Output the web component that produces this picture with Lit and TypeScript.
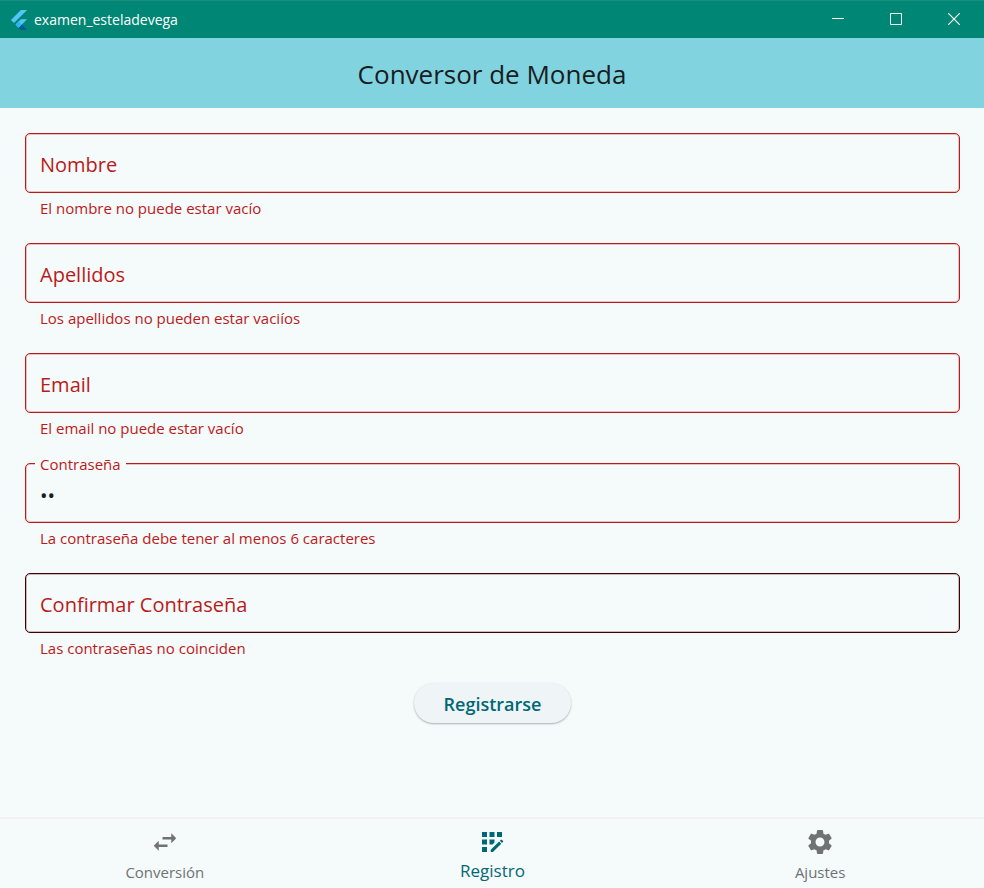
import { LitElement, html, css, svg, nothing } from "lit";
import { customElement, property, state } from "lit/decorators.js";
import { classMap } from "lit/directives/class-map.js";

interface Field {
  id: string;
  label: string;
  error: string;
  type: string;
  value: string;
  hovered?: boolean;
}

const FIELDS: Field[] = [
  { id: "nombre", label: "Nombre", error: "El nombre no puede estar vacío", type: "text", value: "" },
  { id: "apellidos", label: "Apellidos", error: "Los apellidos no pueden estar vaciíos", type: "text", value: "" },
  { id: "email", label: "Email", error: "El email no puede estar vacío", type: "text", value: "" },
  { id: "clave", label: "Contraseña", error: "La contraseña debe tener al menos 6 caracteres", type: "password", value: "ab" },
  { id: "confirmar", label: "Confirmar Contraseña", error: "Las contraseñas no coinciden", type: "password", value: "", hovered: true },
];

const TABS = [
  {
    label: "Conversión",
    icon: svg`<path d="M6.99 11L3 15l3.99 4v-3H14v-2H6.99v-3zM21 9l-3.99-4v3H10v2h7.01v3L21 9z"/>`,
  },
  {
    label: "Registro",
    icon: svg`<path d="M10 4h4v4h-4zM4 16h4v4H4zM4 10h4v4H4zM4 4h4v4H4zM14 12.42V10h-4v4h2.42zM20.88 11.29l-1.17-1.17c-.16-.16-.42-.16-.58 0l-.88.88L20 12.75l.88-.88c.16-.16.16-.42 0-.58zM11 18.25V20h1.75l6.67-6.67-1.75-1.75zM16 4h4v4h-4z"/>`,
  },
  {
    label: "Ajustes",
    icon: svg`<path d="M19.14 12.94c.04-.3.06-.61.06-.94 0-.32-.02-.64-.07-.94l2.03-1.58c.18-.14.23-.41.12-.61l-1.92-3.32c-.12-.22-.37-.29-.59-.22l-2.39.96c-.5-.38-1.03-.7-1.62-.94l-.36-2.54c-.04-.24-.24-.41-.48-.41h-3.84c-.24 0-.43.17-.47.41l-.36 2.54c-.59.24-1.13.57-1.62.94l-2.39-.96c-.22-.08-.47 0-.59.22L2.74 8.87c-.12.21-.08.47.12.61l2.03 1.58c-.05.3-.09.63-.09.94s.02.64.07.94l-2.03 1.58c-.18.14-.23.41-.12.61l1.92 3.32c.12.22.37.29.59.22l2.39-.96c.5.38 1.03.7 1.62.94l.36 2.54c.05.24.24.41.48.41h3.84c.24 0 .44-.17.47-.41l.36-2.54c.59-.24 1.13-.56 1.62-.94l2.39.96c.22.08.47 0 .59-.22l1.92-3.32c.12-.22.07-.47-.12-.61l-2.01-1.58zM12 15.6c-1.98 0-3.6-1.62-3.6-3.6s1.62-3.6 3.6-3.6 3.6 1.62 3.6 3.6-1.62 3.6-3.6 3.6z"/>`,
  },
];

@customElement("title-bar")
export class TitleBar extends LitElement {
  static styles = css`
    :host {
      display: flex;
      align-items: center;
      height: 38px;
      box-sizing: border-box;
      border-top: 1px solid #1a8e7d;
      padding: 0 1px 0 9px;
      background: #008675;
      color: #fff;
    }
    .logo {
      width: 20px;
      height: 20px;
      margin-right: 5px;
    }
    .name {
      flex: 1;
      font-size: 14px;
      line-height: 20px;
    }
    .control {
      display: grid;
      place-items: center;
      width: 58px;
      height: 36px;
      padding: 0 0 2px;
      border: 0;
      background: none;
      color: inherit;
    }
    .glyph {
      width: 12px;
      height: 12px;
      fill: none;
      stroke: currentColor;
    }
    .cross {
      stroke-width: 1.2;
    }
  `;

  render() {
    return html`
      <svg class="logo" viewBox="0 0 24 24" aria-hidden="true">
        <path fill="#54c5f8" d="M14.314 0L2.3 12 6 15.7 21.684.013z" />
        <path fill="#54c5f8" d="M14.328 11.072L7.857 17.53l3.7 3.7L21.7 11.072z" />
        <path fill="#01579b" d="M11.557 21.23L14.327 24H21.7l-6.46-6.468z" />
        <path fill="#29b6f6" d="M7.857 17.53l3.69-3.69 3.693 3.692-3.683 3.698z" />
      </svg>
      <span class="name">examen_esteladevega</span>
      <button class="control" aria-label="Minimizar">
        <svg class="glyph" viewBox="0 0 12 12"><path d="M0 5.5h12" /></svg>
      </button>
      <button class="control" aria-label="Maximizar">
        <svg class="glyph" viewBox="0 0 12 12"><path d="M.5.5h11v11H.5z" /></svg>
      </button>
      <button class="control" aria-label="Cerrar">
        <svg class="glyph cross" viewBox="0 0 12 12"><path d="M.3.3l11.4 11.4M11.7.3L.3 11.7" /></svg>
      </button>
    `;
  }
}

@customElement("outlined-field")
export class OutlinedField extends LitElement {
  @property({ attribute: false }) field!: Field;
  @state() private filled = false;

  static styles = css`
    :host {
      display: block;
      color: #ba1a1a;
    }
    .box {
      position: relative;
      height: 60px;
      box-sizing: border-box;
      border: 1px solid #ba1a1a;
      border-radius: 5px;
      box-shadow: inset 0 0 0 1px #ba1a1a40;
    }
    .hovered {
      border-color: #410002;
      box-shadow: inset 0 0 0 1px #41000240;
    }
    .label {
      position: absolute;
      top: 18px;
      left: 9px;
      padding: 0 5px;
      font-size: 20px;
      line-height: 26px;
      pointer-events: none;
    }
    .floating {
      top: -10px;
      background: #f5fafb;
      font-size: 15px;
      line-height: 20px;
    }
    .input {
      width: 100%;
      height: 100%;
      box-sizing: border-box;
      padding: 5px 14px 0;
      border: 0;
      outline: 0;
      background: none;
      color: #171d1e;
      font: inherit;
      font-size: 20px;
    }
    .error {
      margin: 5px 15px 1px;
      font-size: 15px;
      line-height: 20px;
    }
  `;

  willUpdate(changed: Map<string, unknown>) {
    if (changed.has("field")) this.filled = this.field.value !== "";
  }

  private onInput(e: Event) {
    this.filled = (e.target as HTMLInputElement).value !== "";
  }

  render() {
    const f = this.field;
    return html`
      <div class=${classMap({ box: true, hovered: !!f.hovered })}>
        <input
          class="input"
          id=${f.id}
          type=${f.type}
          .value=${f.value}
          aria-invalid="true"
          aria-describedby="error"
          @input=${this.onInput}
        />
        <label class=${classMap({ label: true, floating: this.filled })} for=${f.id}>${f.label}</label>
      </div>
      <p class="error" id="error">${f.error}</p>
    `;
  }
}

@customElement("app-root")
export class AppRoot extends LitElement {
  @state() private tab = 1;

  static styles = css`
    :host {
      display: flex;
      flex-direction: column;
      min-height: 100vh;
      background: #f5fafb;
      color: #171d1e;
      font-family: "Open Sans", "Noto Sans", sans-serif;
      font-weight: 400;
    }
    .header {
      display: grid;
      place-items: center;
      height: 70px;
      box-sizing: border-box;
      padding-top: 2px;
      background: #82d3e0;
    }
    .title {
      margin: 0;
      font-size: 26px;
      font-weight: 400;
      line-height: 36px;
    }
    .form {
      flex: 1;
      display: flex;
      flex-direction: column;
      gap: 24px;
      padding: 25px 24px 24px 25px;
    }
    .submit {
      align-self: center;
      height: 40px;
      padding: 2px 30px 0;
      border: 0;
      border-radius: 20px;
      background: #eff4f7;
      box-shadow: 0 1px 2px #0000004d;
      color: #006874;
      font: inherit;
      font-size: 18px;
      font-weight: 600;
      line-height: 24px;
    }
    .tabs {
      display: grid;
      grid-template-columns: repeat(3, 1fr);
      height: 69px;
      padding-left: 1px;
      border-top: 2px solid #eff3f4;
    }
    .tab {
      display: flex;
      flex-direction: column;
      align-items: center;
      gap: 5px;
      padding: 8px 0 0;
      border: 0;
      background: none;
      color: #6f7374;
      font: inherit;
      font-size: 15px;
      line-height: 20px;
    }
    .selected {
      gap: 4px;
      color: #006874;
      font-size: 17px;
    }
    .icon {
      width: 30px;
      height: 30px;
      fill: currentColor;
    }
  `;

  render() {
    return html`
      <title-bar></title-bar>
      <header class="header"><h1 class="title">Conversor de Moneda</h1></header>
      <form class="form" @submit=${(e: Event) => e.preventDefault()}>
        ${FIELDS.map((f) => html`<outlined-field .field=${f}></outlined-field>`)}
        <button class="submit" type="submit">Registrarse</button>
      </form>
      <nav class="tabs">
        ${TABS.map(
          (t, i) => html`
            <button
              class=${classMap({ tab: true, selected: i === this.tab })}
              aria-current=${i === this.tab ? "page" : nothing}
              @click=${() => (this.tab = i)}
            >
              <svg class="icon" viewBox="0 0 24 24" aria-hidden="true">${t.icon}</svg>
              <span>${t.label}</span>
            </button>
          `,
        )}
      </nav>
    `;
  }
}
